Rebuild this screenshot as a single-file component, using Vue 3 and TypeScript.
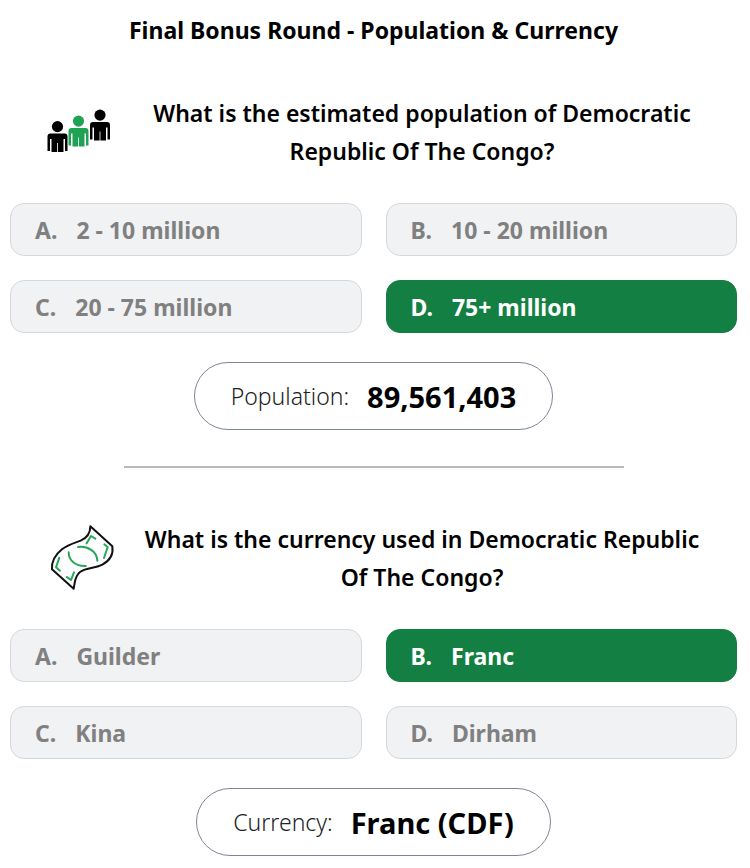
<script setup lang="ts">
import { reactive } from 'vue'

interface Question {
  id: string
  icon: 'people' | 'banknote'
  text: string
  options: string[]
  correct: number
  label: string
  answer: string
}

const questions: Question[] = [
  {
    id: 'population',
    icon: 'people',
    text: 'What is the estimated population of Democratic Republic Of The Congo?',
    options: ['2 - 10 million', '10 - 20 million', '20 - 75 million', '75+ million'],
    correct: 3,
    label: 'Population:',
    answer: '89,561,403',
  },
  {
    id: 'currency',
    icon: 'banknote',
    text: 'What is the currency used in Democratic Republic Of The Congo?',
    options: ['Guilder', 'Franc', 'Kina', 'Dirham'],
    correct: 1,
    label: 'Currency:',
    answer: 'Franc (CDF)',
  },
]

const chosen = reactive<Record<string, number>>({ population: 3, currency: 1 })
const letters = ['A', 'B', 'C', 'D']
</script>

<template>
  <main class="page">
    <h1 class="title">Final Bonus Round - Population &amp; Currency</h1>
    <section v-for="q in questions" :key="q.id" class="round" :aria-labelledby="q.id">
      <header class="question">
        <svg v-if="q.icon === 'people'" class="icon" viewBox="0 0 64 64" aria-hidden="true">
          <defs>
            <g id="person">
              <circle cx="10" cy="5.6" r="5.6" />
              <path d="M3 12.500H17Q20 12.500 20 15.500V30H17.500V18H16V31H10.400V22H9.600V31H4V18H2.500V30H0V15.500Q0 12.500 3 12.500Z" />
            </g>
          </defs>
          <use href="#person" x="0.5" y="21" />
          <use href="#person" x="21.5" y="15.5" class="green-fill" />
          <use href="#person" x="43" y="9.5" />
        </svg>
        <svg v-else class="icon" viewBox="21 33 192 192" aria-hidden="true">
          <path class="note-edge" d="M151 34L217 94C221 119 209 137 187 149C168 160 139 157 120 171C103 184 105 203 101 221L36 163C34 137 46 119 66 103C83 89 106 83 122 77C144 68 151 52 151 34Z" />
          <g class="note-detail">
            <path d="M114 96C143 93 171 108 172 137M86 112C86 138 108 154 137 153" />
            <path d="M140 85L153 63L166 71M193 88L203 96L192 129M58 128L48 157L60 167M80 186L93 195L102 172" />
          </g>
        </svg>
        <h2 :id="q.id" class="prompt">{{ q.text }}</h2>
      </header>
      <div class="options">
        <button
          v-for="(option, i) in q.options"
          :key="option"
          type="button"
          class="option"
          :class="{ correct: i === q.correct }"
          :aria-pressed="chosen[q.id] === i"
          @click="chosen[q.id] = i"
        >
          <span>{{ letters[i] }}.</span>
          <span>{{ option }}</span>
        </button>
      </div>
      <p class="result">
        <span class="label">{{ q.label }}</span>
        <strong class="answer">{{ q.answer }}</strong>
      </p>
    </section>
  </main>
</template>

<style>
body {
  margin: 0;
  background: #fff;
}
</style>

<style scoped>
.page {
  padding: 11px 13px 11px 10px;
  color: #000;
  font-family: "Noto Sans", "Open Sans", sans-serif;
}

.title,
.prompt {
  margin: 0;
  font-size: 23px;
  font-weight: 600;
  line-height: 38px;
  text-align: center;
}

.title {
  font-weight: 700;
}

.round {
  display: flex;
  flex-direction: column;
  align-items: center;
  padding-top: 45px;
}

.round + .round {
  margin-top: 36px;
  padding-top: 52px;
}

.round + .round::before {
  content: "";
  width: 500px;
  max-width: 100%;
  height: 2px;
  margin: -52px 0 52px;
  background: #b9b9b9;
}

.question {
  display: flex;
  align-items: center;
  align-self: stretch;
  gap: 24px;
  padding: 0 28px 0 37px;
}

.icon {
  flex: none;
  width: 64px;
  height: 64px;
  overflow: visible;
}

.green-fill {
  fill: #1fa254;
}

.note-edge {
  fill: none;
  stroke: #111;
  stroke-width: 6;
  stroke-linejoin: round;
}

.note-detail {
  fill: none;
  stroke: #26a65b;
  stroke-width: 6;
  stroke-linecap: round;
  stroke-linejoin: round;
}

.prompt {
  flex: 1;
}

.options {
  display: grid;
  grid-template-columns: 1fr 1fr;
  align-self: stretch;
  gap: 24px;
  margin-top: 33px;
}

.option {
  display: flex;
  align-items: center;
  gap: 19px;
  height: 53px;
  padding: 0 24px;
  border: 1px solid #d6d8dc;
  border-radius: 14px;
  background: #f1f2f4;
  color: #808080;
  font: inherit;
  font-size: 23px;
  font-weight: 700;
  cursor: pointer;
}

.correct {
  border-color: #137f43;
  background: #137f43;
  color: #fff;
}

.result {
  display: flex;
  align-items: center;
  gap: 18px;
  height: 66px;
  margin: 29px 0 0;
  padding: 0 36px;
  border: 1px solid #7c8696;
  border-radius: 34px;
}

.label {
  color: #222;
  font-size: 23px;
  font-weight: 300;
}

.answer {
  font-size: 29px;
  font-weight: 700;
}
</style>
